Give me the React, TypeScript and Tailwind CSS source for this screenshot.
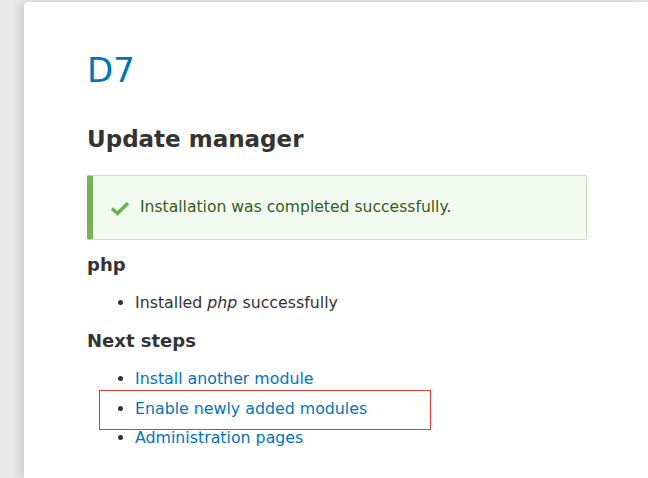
export default function App() {
  return (
    <div className="min-h-[478px] w-[648px] overflow-hidden bg-[#e8e8e8] pl-6 pt-[2px]" style={{ fontFamily: '"DejaVu Sans", Verdana, sans-serif' }}>
      <div className="min-h-[476px] rounded-tl-[4px] bg-white pl-[63px] pt-[48px] shadow-[-4px_0_10px_rgba(0,0,0,0.12)]">
        <h1 className="text-[34px] leading-[40px] text-[#0074bd]">D7</h1>
        <h2 className="mt-[34px] text-[23px] font-bold leading-[30px] text-[#333]">Update manager</h2>
        <div className="mt-[21px] flex h-[65px] w-[500px] items-center rounded-[2px] border border-l-[6px] border-[#c9e1bd] border-l-[#77b259] bg-[#f3faef] pl-[17px] text-[15.6px] text-[#325e1c]">
          <svg width="20" height="16" viewBox="0 0 20 16" className="mr-[10px]">
            <path d="M2 8.5 L7.5 13.5 L18 3" fill="none" stroke="#6ab24d" strokeWidth="3.4" />
          </svg>
          Installation was completed successfully.
        </div>
        <h3 className="mt-[13px] text-[18px] font-bold leading-[24px] text-[#333]">php</h3>
        <ul className="mt-[15px] list-disc pl-[48px] text-[15.8px] leading-[22px] text-[#333]">
          <li>Installed <em>php</em> successfully</li>
        </ul>
        <h3 className="mt-[15px] text-[18px] font-bold leading-[24px] text-[#333]">Next steps</h3>
        <ul className="relative mt-[11px] list-disc pl-[48px] text-[15.8px] leading-[29.5px] text-[#333]">
          <li><a className="text-[#0074bd]">Install another module</a></li>
          <li className="relative">
            <span className="pointer-events-none absolute left-[-36px] top-[-4px] h-[40px] w-[332px] border border-[#e53935]" />
            <a className="text-[#0074bd]">Enable newly added modules</a>
          </li>
          <li><a className="text-[#0074bd]">Administration pages</a></li>
        </ul>
      </div>
    </div>
  );
}
